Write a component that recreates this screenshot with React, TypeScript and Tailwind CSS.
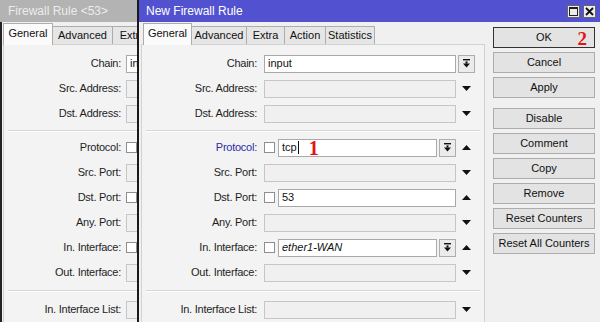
import React from 'react'

type FieldRow = {
  label: string
  kind: 'text' | 'disabled' | 'check'
  value?: string
  btn?: boolean
  trail?: 'button' | 'down' | 'up'
  blue?: boolean
  italic?: boolean
  mark?: boolean
}
type Row = FieldRow | { sep: 'a' | 'b' }

const rows: Row[] = [
  { label: 'Chain:', kind: 'text', value: 'input', trail: 'button' },
  { label: 'Src. Address:', kind: 'disabled', trail: 'down' },
  { label: 'Dst. Address:', kind: 'disabled', trail: 'down' },
  { sep: 'a' },
  { label: 'Protocol:', kind: 'check', value: 'tcp', btn: true, trail: 'up', blue: true, mark: true },
  { label: 'Src. Port:', kind: 'disabled', trail: 'down' },
  { label: 'Dst. Port:', kind: 'check', value: '53', trail: 'up' },
  { label: 'Any. Port:', kind: 'disabled', trail: 'down' },
  { label: 'In. Interface:', kind: 'check', value: 'ether1-WAN', btn: true, trail: 'up', italic: true },
  { label: 'Out. Interface:', kind: 'disabled', trail: 'down' },
  { sep: 'b' },
  { label: 'In. Interface List:', kind: 'disabled', trail: 'down' },
]

const buttons = ['OK', 'Cancel', 'Apply', 'Disable', 'Comment', 'Copy', 'Remove', 'Reset Counters', 'Reset All Counters']

function DropButton() {
  return (
    <div className="flex h-[18px] w-[17px] shrink-0 items-center justify-center border border-[#adadad] bg-[#ececec]">
      <svg width="9" height="9" viewBox="0 0 9 9">
        <rect x="1" y="0" width="7" height="1.4" fill="#111" />
        <rect x="3.5" y="2.4" width="2" height="2.2" fill="#111" />
        <path d="M1 4.6h7L4.5 8.6z" fill="#111" />
      </svg>
    </div>
  )
}

function Arrow({ up }: { up?: boolean }) {
  return (
    <svg width="9" height="5" viewBox="0 0 9 5">
      <path d={up ? 'M0 5h9L4.5 0z' : 'M0 0h9L4.5 5z'} fill="#111" />
    </svg>
  )
}

function Field({ row }: { row: FieldRow }) {
  if (row.kind === 'disabled') {
    return <div className="h-[18px] w-full border border-[#c6c6c6] bg-[#f0f0f0]" />
  }
  const input = (
    <div className="flex h-[18px] min-w-0 flex-1 items-center overflow-hidden whitespace-nowrap border border-[#a9a9a9] bg-white px-[3px] text-[11px] text-[#111]">
      <span className={row.italic ? 'italic' : ''}>{row.value}</span>
      {row.mark && (
        <>
          <span className="ml-px h-[13px] w-px bg-[#111]" />
          <span className="ml-[10px] text-[20px] font-bold leading-none text-[#e41414] [font-family:'Liberation_Serif',serif]">1</span>
        </>
      )}
    </div>
  )
  if (row.kind === 'text') return <div className="flex w-full">{input}</div>
  return (
    <div className="flex w-full items-center">
      <div className="mr-[3px] h-[11px] w-[11px] shrink-0 border border-[#8e8e8e] bg-white" />
      {input}
      {row.btn && (
        <div className="ml-[2px]">
          <DropButton />
        </div>
      )}
    </div>
  )
}

function Form({ labelW, fieldGap, sepPad, active }: { labelW: string; fieldGap: string; sepPad: string; active?: boolean }) {
  return (
    <div className="flex flex-col pt-[6px]">
      {rows.map((row, i) => {
        if ('sep' in row) {
          return (
            <div key={i} className={`flex flex-col justify-center ${sepPad} ${row.sep === 'a' ? 'h-[9px]' : 'h-[12px]'}`}>
              <div className="border-t border-b border-t-[#d6d6d6] border-b-white" />
            </div>
          )
        }
        return (
          <div key={i} className="flex h-[25px] shrink-0 items-center whitespace-nowrap">
            <div
              className={`${labelW} shrink-0 text-right text-[11px] tracking-[-0.25px] ${
                row.blue && active ? 'text-[#2c2ca6]' : 'text-[#1e1e1e]'
              }`}
            >
              {row.label}
            </div>
            <div className={`${fieldGap} w-[192px] shrink-0`}>
              <Field row={row} />
            </div>
            <div className="flex w-[21px] shrink-0 items-center justify-center">
              {row.trail === 'button' && <DropButton />}
              {row.trail === 'down' && <Arrow />}
              {row.trail === 'up' && <Arrow up />}
            </div>
          </div>
        )
      })}
    </div>
  )
}

function Tab({ label, active, w }: { label: string; active?: boolean; w: string }) {
  return active ? (
    <div className={`${w} relative z-10 -mb-px flex h-[22px] shrink-0 items-center justify-center border border-b-0 border-[#adadad] bg-[#fbfbfb] pb-[2px] text-[11px] text-[#111]`}>
      {label}
    </div>
  ) : (
    <div className={`${w} flex h-[18px] shrink-0 items-center justify-center overflow-hidden whitespace-nowrap border border-b-0 border-l-0 border-[#adadad] bg-[#e6e6e6] text-[11px] text-[#111]`}>
      {label}
    </div>
  )
}

export default function App() {
  return (
    <div className="flex h-[322px] w-[600px] overflow-hidden bg-[#f0f0f0] [font-family:'Liberation_Sans',Arial,sans-serif]">
      {/* window behind */}
      <div className="flex w-[137px] shrink-0 flex-col overflow-hidden">
        <div className="flex h-[22px] shrink-0 items-center whitespace-nowrap bg-[#b3b3b3] pl-[8px] text-[12px] text-[#ececec]">
          Firewall Rule &lt;53&gt;
        </div>
        <div className="flex flex-1 flex-col border-l-2 border-[#222]">
          <div className="flex h-[22px] shrink-0 items-end pl-px">
            <Tab label="General" active w="w-[50px]" />
            <Tab label="Advanced" w="w-[60px]" />
            <Tab label="Extra" w="w-[40px]" />
          </div>
          <div className="ml-px flex-1 border-t border-l border-[#d2d2d2] bg-[#f3f3f3]">
            <Form labelW="w-[117px]" fieldGap="ml-[5px]" sepPad="pl-[4px] w-[300px]" />
          </div>
        </div>
      </div>

      {/* front window */}
      <div className="flex flex-1 flex-col border-l-2 border-[#1a1a1a]">
        <div className="flex h-[22px] shrink-0 items-center bg-[#5252d0] pl-[7px] pr-[4px]">
          <span className="text-[12px] text-white">New Firewall Rule</span>
          <div className="ml-auto flex gap-[3px]">
            <div className="flex h-[13px] w-[13px] items-center justify-center border border-[#666] bg-[#ececec]">
              <svg width="9" height="9" viewBox="0 0 9 9">
                <rect x="0.5" y="0.5" width="8" height="8" fill="none" stroke="#222" />
                <rect x="0" y="0" width="9" height="2" fill="#222" />
              </svg>
            </div>
            <div className="flex h-[13px] w-[13px] items-center justify-center border border-[#666] bg-[#ececec]">
              <svg width="9" height="9" viewBox="0 0 9 9">
                <path d="M1 1l7 7M8 1l-7 7" stroke="#111" strokeWidth="1.8" />
              </svg>
            </div>
          </div>
        </div>
        <div className="flex flex-1">
          <div className="flex w-[346px] shrink-0 flex-col">
            <div className="flex h-[22px] shrink-0 items-end pl-[4px]">
              <Tab label="General" active w="w-[49px]" />
              <Tab label="Advanced" w="w-[55px]" />
              <Tab label="Extra" w="w-[38px]" />
              <Tab label="Action" w="w-[41px]" />
              <Tab label="Statistics" w="w-[49px]" />
            </div>
            <div className="ml-[2px] flex-1 border border-b-0 border-[#d2d2d2] bg-[#f3f3f3]">
              <Form labelW="w-[115px]" fieldGap="ml-[7px]" sepPad="px-[4px]" active />
            </div>
          </div>
          <div className="ml-[8px] flex w-[102px] shrink-0 flex-col gap-[4px] pt-[5px]">
            {buttons.map((b) => (
              <div
                key={b}
                className={`relative flex h-[21px] items-center justify-center whitespace-nowrap border bg-[#e3e3e3] text-[11px] text-[#111] ${
                  b === 'OK' ? 'border-[#333]' : 'border-[#adadad]'
                } ${b === 'Disable' ? 'mt-[6px]' : ''}`}
              >
                {b}
                {b === 'OK' && (
                  <span className="absolute right-[7px] top-px text-[19px] font-bold leading-none text-[#e41414] [font-family:'Liberation_Serif',serif]">
                    2
                  </span>
                )}
              </div>
            ))}
          </div>
        </div>
      </div>
    </div>
  )
}
